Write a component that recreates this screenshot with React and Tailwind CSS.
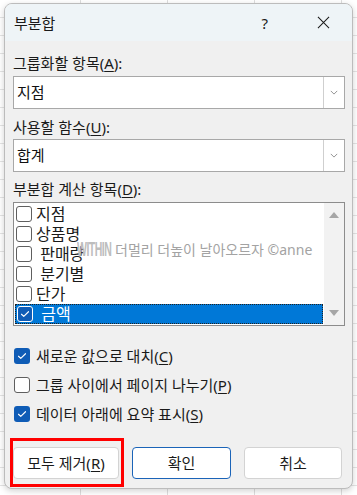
import React from "react";

const font = "font-['Noto_Sans','Noto_Sans_CJK_KR',sans-serif]";

const Check = () => (
  <svg viewBox="0 0 16 16" className="w-[14px] h-[14px]">
    <path d="M4 8.3l2.6 2.5L12 5.4" fill="none" stroke="white" strokeWidth="1.3" strokeLinecap="round" strokeLinejoin="round" />
  </svg>
);

const Box = ({ checked, inList }) =>
  checked ? (
    <div
      className={`w-[16px] h-[16px] rounded-[3px] bg-[#0f5cb6] flex items-center justify-center shrink-0 ${
        inList ? "border border-white" : ""
      }`}
    >
      <Check />
    </div>
  ) : (
    <div className="w-[16px] h-[16px] rounded-[3px] border border-[#5f5f5f] bg-white shrink-0" />
  );

const Chevron = () => (
  <svg viewBox="0 0 10 6" className="w-[8px] h-[5px]">
    <path d="M1 1l4 4 4-4" fill="none" stroke="#7a7a7a" strokeWidth="1" />
  </svg>
);

const Dropdown = ({ value, className }) => (
  <div className={`h-[33px] flex border border-[#a8a8a8] bg-white ${className}`}>
    <div className="flex-1 flex items-center pl-[3px] text-[15px] text-[#111]">{value}</div>
    <div className="w-[21px] border-l border-[#cfcfcf] flex items-center justify-center">
      <Chevron />
    </div>
  </div>
);

const U = ({ children }) => <span className="underline underline-offset-2">{children}</span>;

const items = [
  { label: "지점" },
  { label: "상품명" },
  { label: " 판매량" },
  { label: " 분기별" },
  { label: "단가" },
  { label: " 금액", checked: true, selected: true },
];

const options = [
  { label: <>새로운 값으로 대치(<U>C</U>)</>, checked: true },
  { label: <>그룹 사이에서 페이지 나누기(<U>P</U>)</>, checked: false },
  { label: <>데이터 아래에 요약 표시(<U>S</U>)</>, checked: true },
];

export default function App() {
  return (
    <div
      className={`${font} w-[357px] h-[495px] overflow-hidden bg-white bg-[linear-gradient(to_right,#dedede_1px,transparent_1px),linear-gradient(to_bottom,#e4e4e4_1px,transparent_1px)] bg-[length:87px_18px] bg-[position:-7px_17px] pl-[4px] pt-[3px]`}
    >
      <div className="relative w-[349px] h-[486px] rounded-[8px] border border-[#bcbcbc] bg-[#f0f0f0] shadow-[0_2px_6px_rgba(0,0,0,0.18)] overflow-hidden flex flex-col text-[#1a1a1a]">
        {/* title bar */}
        <div className="h-[37px] bg-[#eef4f7] flex items-center pl-[9px] pr-[22px] shrink-0">
          <span className="text-[15px] leading-[20px]">부분합</span>
          <span className="ml-auto mr-[49px] text-[15px] leading-[20px]">?</span>
          <svg viewBox="0 0 14 14" className="w-[13px] h-[13px]">
            <path d="M1 1l12 12M13 1L1 13" stroke="#1a1a1a" strokeWidth="1.1" />
          </svg>
        </div>

        {/* body */}
        <div className="flex flex-col pl-[8px] pr-[7px] pt-[12px] text-[15px]">
          <div className="leading-[20px]">그룹화할 항목(<U>A</U>):</div>
          <Dropdown value="지점" className="mt-[3px]" />
          <div className="leading-[20px] mt-[8px]">사용할 함수(<U>U</U>):</div>
          <Dropdown value="합계" className="mt-[2px]" />
          <div className="leading-[20px] mt-[7px]">부분합 계산 항목(<U>D</U>):</div>

          <div className="relative mt-[3px] h-[124px] border border-[#8c8c8c] bg-white flex">
            <div className="flex-1 p-[1px] flex flex-col">
              {items.map((it, i) => (
                <div
                  key={i}
                  className={`h-[20px] flex items-center pl-[1px] gap-[4px] ${
                    it.selected ? "bg-[#0078d7] text-white border border-dotted border-[#222]" : ""
                  }`}
                >
                  <Box checked={it.checked} inList />
                  <span className="text-[16px] leading-[20px] whitespace-pre">{it.label}</span>
                </div>
              ))}
            </div>
            <div className="w-[20px] bg-[#f2f2f2] flex flex-col items-center justify-between py-[9px]">
              <svg viewBox="0 0 10 6" className="w-[10px] h-[6px]">
                <path d="M0 6L5 0l5 6z" fill="#a6a6a6" />
              </svg>
              <svg viewBox="0 0 10 6" className="w-[10px] h-[6px]">
                <path d="M0 0l5 6 5-6z" fill="#a6a6a6" />
              </svg>
            </div>
            {/* watermark */}
            <div className="absolute left-[63px] top-[36px] flex items-center pointer-events-none">
              <span className="w-[33px] overflow-visible whitespace-nowrap">
                <span className="inline-block origin-left scale-x-50 font-['Liberation_Sans',sans-serif] text-[21px] leading-[20px] font-bold tracking-[-1px] text-[#bdbdbd]">
                  WITHIN
                </span>
              </span>
              <span className="ml-[5px] text-[14px] leading-[20px] text-[#a3a3a3] whitespace-nowrap">
                더멀리 더높이 날아오르자 ©anne
              </span>
            </div>
          </div>

          <div className="mt-[20px] flex flex-col gap-[9px]">
            {options.map((o, i) => (
              <div key={i} className="h-[20px] flex items-center gap-[6px] pl-[1px]">
                <Box checked={o.checked} />
                <span className="leading-[20px]">{o.label}</span>
              </div>
            ))}
          </div>

          <div className="mt-[23px] flex gap-[13px]">
            <button className="relative w-[106px] h-[32px] rounded-[4px] border border-[#d3d3d3] bg-white text-[15px]">
              모두 제거(<U>R</U>)
              <span className="absolute -left-[4px] -top-[10px] w-[114px] h-[49px] border-[3px] border-[#ff0000] pointer-events-none" />
            </button>
            <button className="w-[99px] h-[32px] rounded-[4px] border border-[#1b64b8] bg-white text-[15px]">확인</button>
            <button className="w-[98px] h-[32px] rounded-[4px] border border-[#d3d3d3] bg-white text-[15px]">취소</button>
          </div>
        </div>
      </div>
    </div>
  );
}
